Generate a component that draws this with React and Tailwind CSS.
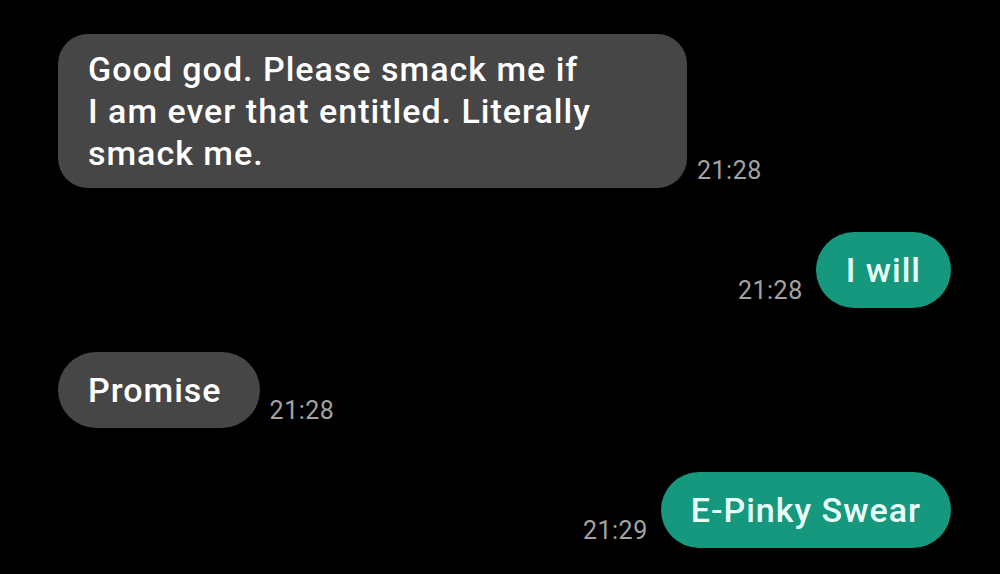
const messages = [
  { id: 1, side: 'in', lines: ['Good god. Please smack me if', 'I am ever that entitled. Literally', 'smack me.'], time: '21:28' },
  { id: 2, side: 'out', lines: ['I will'], time: '21:28' },
  { id: 3, side: 'in', lines: ['Promise'], time: '21:28' },
  { id: 4, side: 'out', lines: ['E-Pinky Swear'], time: '21:29' },
]

function Time({ children }) {
  return (
    <span className="mb-[5px] text-[25px] leading-[24px] tracking-[0.5px] text-[#a3a3a3]">{children}</span>
  )
}

function Bubble({ msg }) {
  const multi = msg.lines.length > 1
  const base = 'text-[34px] font-medium leading-[42px] tracking-[1px] whitespace-nowrap'
  if (msg.side === 'in') {
    return (
      <div
        className={
          multi
            ? `${base} w-[629px] rounded-[30px] bg-[#464646] px-[30px] py-[14px] text-white`
            : `${base} rounded-full bg-[#464646] py-[17px] pl-[30px] pr-[38px] text-white`
        }
      >
        {msg.lines.map((l, i) => (
          <div key={i}>{l}</div>
        ))}
      </div>
    )
  }
  return (
    <div className={`${base} rounded-full bg-[#16987e] px-[30px] py-[17px] text-[#eafff8]`}>
      {msg.lines[0]}
    </div>
  )
}

export default function App() {
  return (
    <div
      className="flex h-[574px] w-[1000px] flex-col gap-[44px] overflow-hidden bg-black pt-[34px]"
      style={{ fontFamily: 'Roboto, "Noto Sans", sans-serif' }}
    >
      {messages.map((msg) =>
        msg.side === 'in' ? (
          <div key={msg.id} className="flex items-end gap-[10px] pl-[58px]">
            <Bubble msg={msg} />
            <Time>{msg.time}</Time>
          </div>
        ) : (
          <div key={msg.id} className="flex items-end justify-end gap-[13px] pr-[49px]">
            <Time>{msg.time}</Time>
            <Bubble msg={msg} />
          </div>
        )
      )}
    </div>
  )
}
